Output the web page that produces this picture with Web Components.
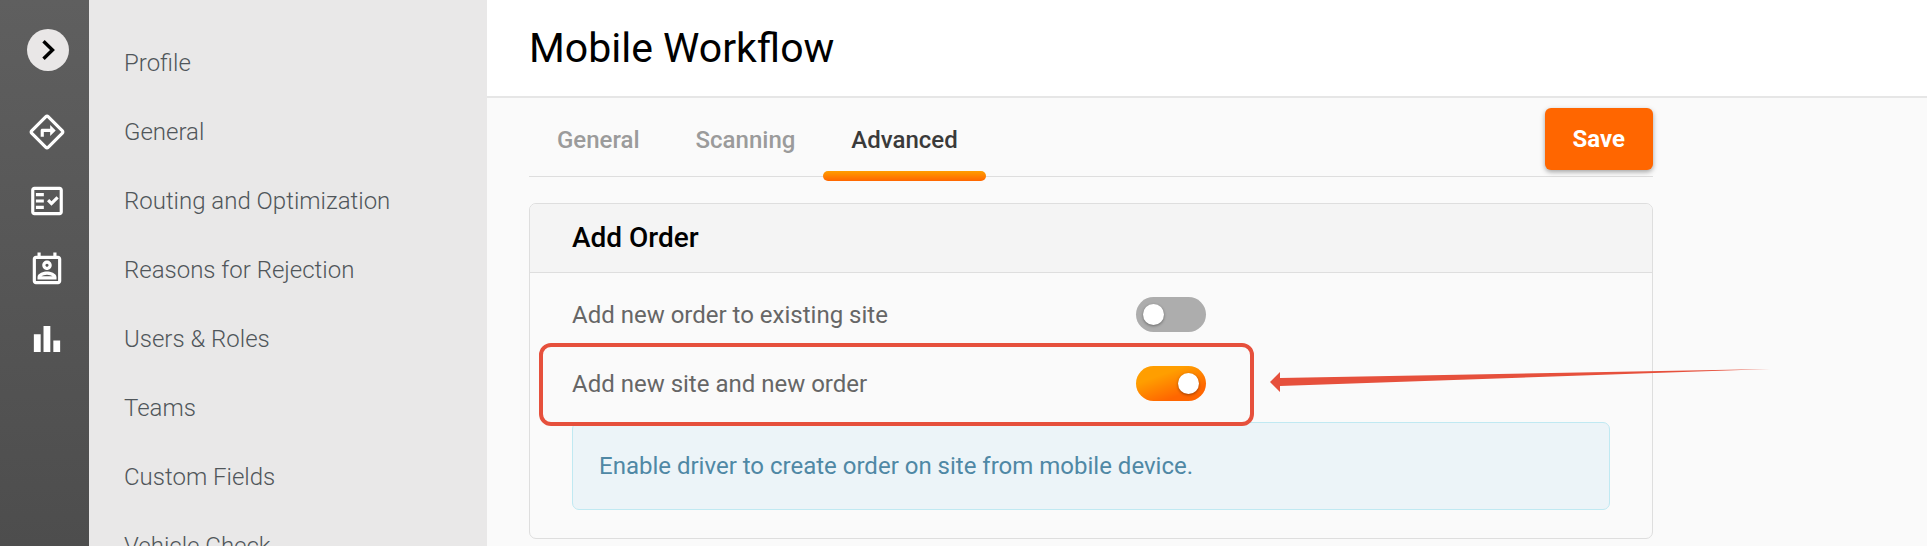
<!DOCTYPE html>
<html lang="en">
<head>
    <meta charset="UTF-8">
    <meta name="viewport" content="width=device-width, initial-scale=1.0">
    <title>Mobile Workflow</title>
    <style>

    :root {
        --accent: #ff6600;
        --accent-light: #ff9e00;
        --line: #dedede;
        --mark: #e6503c;
    }

    body {
        margin: 0;
        font-family: Roboto, sans-serif;
        font-size: 24px;
        line-height: 28px;
        background-color: #fafafa;
        color: #666666;
        overflow: hidden;
    }

    </style>
</head>
<body>
    <template id="shell-template">
        <style>
        :host {
            display: flex;
            height: 100vh;
            overflow: hidden;
        }
        main {
            flex: 1;
            min-width: 0;
        }
        .content {
            max-width: 1124px;
            padding: 0 42px;
        }
        </style>
        <slot name="rail"></slot>
        <slot name="menu"></slot>
        <main>
            <slot name="header"></slot>
            <div class="content"><slot></slot></div>
        </main>
    </template>

    <template id="rail-template">
        <style>
        :host {
            display: flex;
            flex-direction: column;
            gap: 42px;
            box-sizing: border-box;
            width: 89px;
            padding: 29px 0 0 27px;
            background: linear-gradient(#5f5f5f, #4d4d4d);
            overflow: hidden;
            flex: none;
        }
        button {
            width: 42px;
            height: 42px;
            padding: 0;
            border: 0;
            border-radius: 50%;
            background-color: #e9e7e7;
        }
        svg {
            display: block;
        }
        nav {
            display: flex;
            flex-direction: column;
            align-items: center;
            gap: 31px;
            width: 40px;
        }
        a {
            color: white;
        }
        </style>
        <button type="button" aria-label="Expand menu">
            <svg width="42" height="42" viewBox="0 0 42 42" fill="none" stroke="#000" stroke-width="3.4"><path d="M16.500 12.200L25.500 21L16.500 29.800"/></svg>
        </button>
        <nav>
            <a href="#routes" aria-label="Routes">
                <svg width="38" height="38" viewBox="0 0 24 24" fill="currentColor"><path d="M22.430 10.590l-9.010-9.010c-.75-.75-2.070-.76-2.830 0l-9 9c-.78.78-.78 2.040 0 2.820l9 9c.39.39.9.58 1.410.58.51 0 1.020-.19 1.410-.58l8.990-8.990c.79-.76.8-2.020.03-2.820zM12.010 20.990l-9-9 9-9 9 9-9 9zM8 11v4h2v-3h4v2.500l3.500-3.500L14 7.500V10H9c-.55 0-1 .45-1 1z"/></svg>
            </a>
            <a href="#orders" aria-label="Orders">
                <svg width="38" height="38" viewBox="0 0 24 24" fill="currentColor"><path fill-rule="evenodd" d="M20 3H4c-1.100 0-2 .9-2 2v14c0 1.100.9 2 2 2h16c1.100 0 2-.9 2-2V5c0-1.100-.9-2-2-2zm0 16H4V5h16v14z"/><path d="M19.410 10.420L17.990 9l-3.170 3.170-1.410-1.420L12 12.160 14.820 15zM5 7h5v2H5zM5 11h5v2H5zM5 15h5v2H5z"/></svg>
            </a>
            <a href="#drivers" aria-label="Drivers">
                <svg width="38" height="38" viewBox="0 0 24 24" fill="currentColor"><path fill-rule="evenodd" d="M19 3h-1V1h-2v2H8V1H6v2H5c-1.110 0-2 .9-2 2v14c0 1.100.89 2 2 2h14c1.100 0 2-.9 2-2V5c0-1.100-.9-2-2-2zm0 16H5V5h14v14z"/><path fill-rule="evenodd" d="M12 12c1.650 0 3-1.350 3-3s-1.350-3-3-3-3 1.350-3 3 1.350 3 3 3zm0-4c.55 0 1 .45 1 1s-.45 1-1 1-1-.45-1-1 .45-1 1-1zm6 8.580c0-2.500-3.970-3.580-6-3.580s-6 1.080-6 3.580V18h12v-1.420zM8.480 16c.74-.51 2.230-1 3.520-1s2.780.49 3.520 1H8.480z"/></svg>
            </a>
            <a href="#reports" aria-label="Reports">
                <svg width="38" height="38" viewBox="0 0 24 24" fill="currentColor"><path d="M3.700 9H8v11.200H3.700zM9.800 3.800h4.300v16.400H9.800zM16 13h4.300v7.200H16z"/></svg>
            </a>
        </nav>
    </template>

    <template id="menu-template">
        <style>
        :host {
            display: block;
            box-sizing: border-box;
            width: 398px;
            padding: 29px 35px 0;
            background-color: #e9e8e8;
            overflow: hidden;
            flex: none;
        }
        </style>
        <nav aria-label="Settings"><slot></slot></nav>
    </template>

    <template id="menu-item-template">
        <style>
        :host {
            display: block;
        }
        a {
            display: block;
            line-height: 69px;
            font-weight: 300;
            color: #50565a;
            text-decoration: none;
        }
        </style>
        <a><slot></slot></a>
    </template>

    <template id="header-template">
        <style>
        :host {
            display: block;
            padding: 0 42px;
            background-color: white;
            border-bottom: 2px solid #e6e6e6;
        }
        h1 {
            margin: 0;
            font-size: 41px;
            line-height: 96px;
            font-weight: 400;
            color: black;
        }
        </style>
        <h1><slot></slot></h1>
    </template>

    <template id="tab-bar-template">
        <style>
        :host {
            display: flex;
            justify-content: space-between;
            height: 78px;
            border-bottom: 1px solid var(--line);
        }
        .tabs {
            display: flex;
        }
        </style>
        <div class="tabs" role="tablist"><slot></slot></div>
        <slot name="action"></slot>
    </template>

    <template id="tab-template">
        <style>
        :host {
            display: block;
            position: relative;
        }
        button {
            height: 84px;
            padding: 0 28px;
            border: 0;
            background: none;
            font: inherit;
            font-weight: 500;
            color: #9b9b9b;
        }
        :host([active]) button {
            color: #3a3a3a;
        }
        :host([active])::after {
            content: "";
            position: absolute;
            left: 0;
            right: 0;
            bottom: -5px;
            height: 10px;
            border-radius: 5px;
            background: linear-gradient(var(--accent-light), var(--accent));
        }
        </style>
        <button type="button" role="tab"><slot></slot></button>
    </template>

    <template id="save-template">
        <style>
        :host {
            display: block;
            padding-top: 10px;
        }
        button {
            height: 62px;
            padding: 0 28px;
            border: 0;
            border-radius: 6px;
            background-color: var(--accent);
            box-shadow: 0 2px 5px rgba(0, 0, 0, 0.35);
            font: inherit;
            font-weight: 700;
            color: white;
        }
        </style>
        <button type="button"><slot></slot></button>
    </template>

    <template id="card-template">
        <style>
        :host {
            display: block;
            margin-top: 26px;
            border: 1px solid var(--line);
            border-radius: 7px;
        }
        h2 {
            margin: 0;
            padding: 0 42px;
            border-bottom: 1px solid var(--line);
            border-radius: 6px 6px 0 0;
            background-color: #f4f4f4;
            font-size: 28px;
            line-height: 68px;
            font-weight: 500;
            color: black;
        }
        .body {
            padding: 7px 42px 28px;
        }
        </style>
        <h2><slot name="title"></slot></h2>
        <div class="body"><slot></slot></div>
    </template>

    <template id="toggle-row-template">
        <style>
        :host {
            display: grid;
            grid-template-columns: minmax(0, 564px) auto 1fr;
            align-items: center;
            height: 69px;
            position: relative;
        }
        input {
            appearance: none;
            display: flex;
            align-items: center;
            box-sizing: border-box;
            width: 70px;
            height: 35px;
            margin: 0;
            padding: 0 7px;
            border-radius: 18px;
            background: #adadad;
        }
        input::before {
            content: "";
            width: 21px;
            height: 21px;
            border-radius: 50%;
            background-color: white;
            box-shadow: 0 1px 3px rgba(0, 0, 0, 0.4);
        }
        input:checked {
            justify-content: flex-end;
            background: linear-gradient(160deg, var(--accent-light) 30%, var(--accent) 75%);
        }
        </style>
        <label for="toggle"><slot></slot></label>
        <input type="checkbox" id="toggle">
        <slot name="mark"></slot>
    </template>

    <!-- red frame and arrow drawn over a row -->
    <template id="callout-template">
        <style>
        :host {
            position: absolute;
            left: -33px;
            top: -6px;
            bottom: -8px;
            width: 715px;
            pointer-events: none;
            z-index: 1;
        }
        .frame {
            box-sizing: border-box;
            height: 100%;
            border: 4px solid var(--mark);
            border-radius: 12px;
        }
        svg {
            position: absolute;
            left: 731px;
            top: 24px;
        }
        </style>
        <div class="frame"></div>
        <svg width="500" height="30" viewBox="0 0 500 30" fill="#e6503c"><path d="M0 15L10 5V11L500 2L10 19V25Z"/></svg>
    </template>

    <template id="info-template">
        <style>
        :host {
            display: block;
            margin-top: 4px;
            padding: 29px 26px;
            border: 1px solid #c0e9f2;
            border-radius: 7px;
            background-color: #ecf4f8;
            color: #4f88a5;
        }
        </style>
        <slot></slot>
    </template>


    <app-shell>
        <icon-rail slot="rail"></icon-rail>

        <settings-menu slot="menu">
            <menu-item href="#profile">Profile</menu-item>
            <menu-item href="#general">General</menu-item>
            <menu-item href="#routing">Routing and Optimization</menu-item>
            <menu-item href="#rejection">Reasons for Rejection</menu-item>
            <menu-item href="#users">Users &amp; Roles</menu-item>
            <menu-item href="#teams">Teams</menu-item>
            <menu-item href="#fields">Custom Fields</menu-item>
            <menu-item href="#vehicle">Vehicle Check</menu-item>
        </settings-menu>

        <page-header slot="header">Mobile Workflow</page-header>

        <tab-bar>
            <tab-item>General</tab-item>
            <tab-item>Scanning</tab-item>
            <tab-item active>Advanced</tab-item>
            <save-button slot="action">Save</save-button>
        </tab-bar>

        <settings-card>
            <span slot="title">Add Order</span>
            <toggle-row>Add new order to existing site</toggle-row>
            <toggle-row checked>
                Add new site and new order
                <callout-mark slot="mark"></callout-mark>
            </toggle-row>
            <info-box>Enable driver to create order on site from mobile device.</info-box>
        </settings-card>
    </app-shell>


    <script>

    class TemplateElement extends HTMLElement {
        constructor() {
            super();
            const tplContent = document.getElementById(this.constructor.template).content;

            const shadowRoot = this.attachShadow({mode: 'open'});
            shadowRoot.appendChild(tplContent.cloneNode(true));
        }
    }

    class AppShell extends TemplateElement {
        static template = 'shell-template';
    }

    class IconRail extends TemplateElement {
        static template = 'rail-template';
    }

    class SettingsMenu extends TemplateElement {
        static template = 'menu-template';
    }

    class MenuItem extends TemplateElement {
        static template = 'menu-item-template';

        connectedCallback() {
            this.shadowRoot.querySelector('a').href = this.getAttribute('href');
        }
    }

    class PageHeader extends TemplateElement {
        static template = 'header-template';
    }

    class TabBar extends TemplateElement {
        static template = 'tab-bar-template';

        connectedCallback() {
            this.addEventListener('click', (e) => {
                const tab = e.target.closest('tab-item');
                if (!tab) return;
                this.querySelectorAll('tab-item').forEach(item => item.toggleAttribute('active', item === tab));
            });
        }
    }

    class TabItem extends TemplateElement {
        static template = 'tab-template';
        static observedAttributes = ['active'];

        attributeChangedCallback() {
            this.shadowRoot.querySelector('button').setAttribute('aria-selected', this.hasAttribute('active'));
        }
    }

    class SaveButton extends TemplateElement {
        static template = 'save-template';
    }

    class SettingsCard extends TemplateElement {
        static template = 'card-template';
    }

    class ToggleRow extends TemplateElement {
        static template = 'toggle-row-template';

        connectedCallback() {
            this.shadowRoot.querySelector('input').checked = this.hasAttribute('checked');
        }
    }

    class CalloutMark extends TemplateElement {
        static template = 'callout-template';
    }

    class InfoBox extends TemplateElement {
        static template = 'info-template';
    }

    customElements.define('app-shell', AppShell);
    customElements.define('icon-rail', IconRail);
    customElements.define('settings-menu', SettingsMenu);
    customElements.define('menu-item', MenuItem);
    customElements.define('page-header', PageHeader);
    customElements.define('tab-bar', TabBar);
    customElements.define('tab-item', TabItem);
    customElements.define('save-button', SaveButton);
    customElements.define('settings-card', SettingsCard);
    customElements.define('toggle-row', ToggleRow);
    customElements.define('callout-mark', CalloutMark);
    customElements.define('info-box', InfoBox);

    </script>

</body>
</html>
